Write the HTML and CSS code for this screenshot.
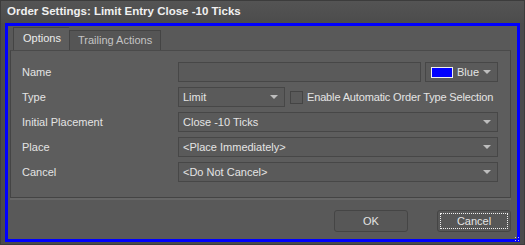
FILE: index.html
```html
<!DOCTYPE html>
<html lang="en">
<head>
    <meta charset="UTF-8">
    <title>Order Settings</title>
    <link rel="stylesheet" href="styles.css">
</head>
<body>

<div class="window">
    <div class="titlebar">Order Settings: Limit Entry Close -10 Ticks</div>

    <div class="frame">
        <div class="tabs">
            <div class="tab active">Options</div>
            <div class="tab">Trailing Actions</div>
        </div>

        <div class="panel">
            <div class="row">
                <div class="label">Name</div>
                <div class="field input wide"></div>
                <div class="field select color">
                    <span class="swatch"></span>
                    <span class="value">Blue</span>
                    <span class="arrow"></span>
                </div>
            </div>
            <div class="row">
                <div class="label">Type</div>
                <div class="field select type">
                    <span class="value">Limit</span>
                    <span class="arrow"></span>
                </div>
                <div class="check">
                    <span class="box"></span>
                    <span>Enable Automatic Order Type Selection</span>
                </div>
            </div>
            <div class="row">
                <div class="label">Initial Placement</div>
                <div class="field select wide">
                    <span class="value">Close -10 Ticks</span>
                    <span class="arrow"></span>
                </div>
            </div>
            <div class="row">
                <div class="label">Place</div>
                <div class="field select wide">
                    <span class="value">&lt;Place Immediately&gt;</span>
                    <span class="arrow"></span>
                </div>
            </div>
            <div class="row">
                <div class="label">Cancel</div>
                <div class="field select wide">
                    <span class="value">&lt;Do Not Cancel&gt;</span>
                    <span class="arrow"></span>
                </div>
            </div>
        </div>

        <div class="buttons">
            <button class="button">OK</button>
            <button class="button focused"><span>Cancel</span></button>
        </div>
        <div class="grip"></div>
    </div>
</div>

</body>
</html>
```

FILE: styles.css
```css
body {
    margin: 0;
    background-color: #4a4a4a;
    font-family: "Liberation Sans", Arial, sans-serif;
    font-size: 11px;
    color: #e4e4e4;
}
.window {
    width: 525px;
    height: 245px;
    box-sizing: border-box;
    border: 1px solid #3c3c3c;
    background-color: #4b4b4b;
}
.titlebar {
    height: 22px;
    line-height: 21px;
    padding-left: 6px;
    font-weight: bold;
    font-size: 11.5px;
    color: #f0f0f0;
    background: linear-gradient(#545454, #4c4c4c);
}
.frame {
    position: relative;
    margin: 0 4px;
    height: 211px;
    border: 3px solid #0000ff;
    background-color: #595959;
    padding: 2px 6px 0 2px;
}
.tabs {
    display: flex;
    align-items: flex-end;
    height: 22px;
    padding-left: 3px;
}
.tab {
    height: 19px;
    line-height: 19px;
    padding: 0 8px;
    border: 1px solid #444;
    border-bottom: none;
    background-color: #555;
    color: #c4c4c4;
}
.tab.active {
    height: 22px;
    line-height: 21px;
    width: 37px;
    padding: 0 9px;
    background-color: #5d5d5d;
    color: #ececec;
    border-right: none;
}
.panel {
    height: 135px;
    border: 1px solid #444;
    border-top-color: #4a4a4a;
    background-color: #5d5d5d;
    box-shadow: 0 2px 0 #666;
    padding: 11px 12px 0 11px;
}
.row {
    display: flex;
    align-items: center;
    height: 20px;
    margin-bottom: 5px;
}
.label {
    width: 156px;
    flex: none;
}
.field {
    height: 20px;
    box-sizing: border-box;
    border: 1px solid #474747;
    background-color: #5a5a5a;
    display: flex;
    align-items: center;
    padding-left: 4px;
}
.wide {
    flex: 1;
}
.select .value {
    flex: 1;
    white-space: nowrap;
}
.arrow {
    width: 0;
    height: 0;
    border-left: 4px solid transparent;
    border-right: 4px solid transparent;
    border-top: 4px solid #bdbdbd;
    margin-right: 6px;
}
.color {
    flex: none;
    width: 73px;
    margin-left: 4px;
    padding-left: 5px;
}
.swatch {
    width: 20px;
    height: 9px;
    border: 1px solid #f0f0f0;
    background-color: #0000ff;
    margin-right: 4px;
}
.type {
    flex: none;
    width: 107px;
}
.check {
    display: flex;
    align-items: center;
    margin-left: 5px;
    white-space: nowrap;
    letter-spacing: -0.15px;
}
.box {
    width: 11px;
    height: 11px;
    border: 1px solid #444;
    background-color: #5a5a5a;
    margin-right: 4px;
}
.buttons {
    display: flex;
    justify-content: flex-end;
    gap: 29px;
    padding: 12px 0 0 0;
}
.button {
    width: 74px;
    height: 22px;
    border: 1px solid #454545;
    border-radius: 3px;
    background-color: #575757;
    color: #e4e4e4;
    font-family: inherit;
    font-size: 11px;
    padding: 2px;
}
.focused span {
    display: block;
    height: 14px;
    line-height: 14px;
    border: 1px dotted #f0f0f0;
}
.grip {
    position: absolute;
    right: -3px;
    bottom: -3px;
    width: 6px;
    height: 6px;
    background: radial-gradient(circle, #cfcfcf 0.7px, transparent 1px) 0 0 / 3px 3px;
}
```
